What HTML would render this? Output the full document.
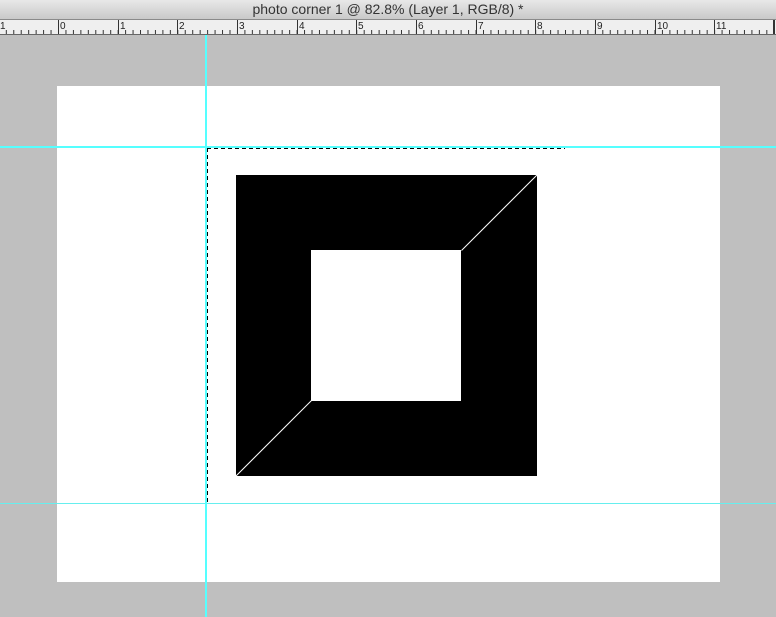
<!DOCTYPE html>
<html><head><meta charset="utf-8"><style>
html,body{margin:0;padding:0;width:776px;height:617px;overflow:hidden;background:#bfbfbf;font-family:"Liberation Sans",sans-serif}
#title{position:absolute;left:0;top:0;width:776px;height:19px;background:linear-gradient(#e8e8e8,#c9c9c9);border-bottom:1px solid #8a8a8a;text-align:center;font-size:14px;line-height:19px;color:#333}
</style></head><body>
<div id="title">photo corner 1 @ 82.8% (Layer 1, RGB/8) *</div>
<svg width="776" height="617" style="position:absolute;left:0;top:0" xmlns="http://www.w3.org/2000/svg">
<defs>
<pattern id="tk" x="58" y="0" width="7.456" height="40" patternUnits="userSpaceOnUse">
<rect x="0" y="30" width="1" height="4" fill="#333"/>
</pattern>
</defs>
<rect x="0" y="20" width="776" height="14" fill="#efefef"/>
<rect x="0" y="20" width="776" height="14" fill="url(#tk)"/>
<rect x="0" y="34" width="776" height="1" fill="#666"/>
<g fill="#333">
<rect x="-2" y="20" width="1" height="14"/>
<rect x="58" y="20" width="1" height="14"/>
<rect x="118" y="20" width="1" height="14"/>
<rect x="177" y="20" width="1" height="14"/>
<rect x="237" y="20" width="1" height="14"/>
<rect x="297" y="20" width="1" height="14"/>
<rect x="356" y="20" width="1" height="14"/>
<rect x="416" y="20" width="1" height="14"/>
<rect x="476" y="20" width="1" height="14"/>
<rect x="535" y="20" width="1" height="14"/>
<rect x="595" y="20" width="1" height="14"/>
<rect x="655" y="20" width="1" height="14"/>
<rect x="714" y="20" width="1" height="14"/>
<rect x="773" y="20" width="2" height="14"/>
</g>
<g font-size="10" fill="#222" font-family="Liberation Sans,sans-serif">
<text x="0" y="29">1</text><text x="60" y="29">0</text><text x="120" y="29">1</text><text x="179" y="29">2</text><text x="239" y="29">3</text><text x="299" y="29">4</text><text x="358" y="29">5</text><text x="418" y="29">6</text><text x="478" y="29">7</text><text x="537" y="29">8</text><text x="597" y="29">9</text><text x="657" y="29">10</text><text x="716" y="29">11</text>
</g>
<rect x="57" y="86" width="663" height="496" fill="#fff"/>
<rect x="236" y="175" width="301" height="301" fill="#000"/>
<rect x="311" y="250" width="150" height="151" fill="#fff"/>
<line x1="461.5" y1="250.5" x2="537" y2="175" stroke="#fff" stroke-width="1"/>
<line x1="311.5" y1="400.5" x2="236" y2="476" stroke="#fff" stroke-width="1"/>
<rect x="0" y="146" width="776" height="2" fill="#5ff"/>
<rect x="0" y="503" width="776" height="1" fill="#6ee"/>
<rect x="205" y="35" width="2" height="582" fill="#5ff"/>
<line x1="207" y1="148.5" x2="565" y2="148.5" stroke="#000" stroke-width="1" stroke-dasharray="4,3"/>
<line x1="207.5" y1="148" x2="207.5" y2="503" stroke="#000" stroke-width="1" stroke-dasharray="4,3"/>
</svg>
</body></html>
